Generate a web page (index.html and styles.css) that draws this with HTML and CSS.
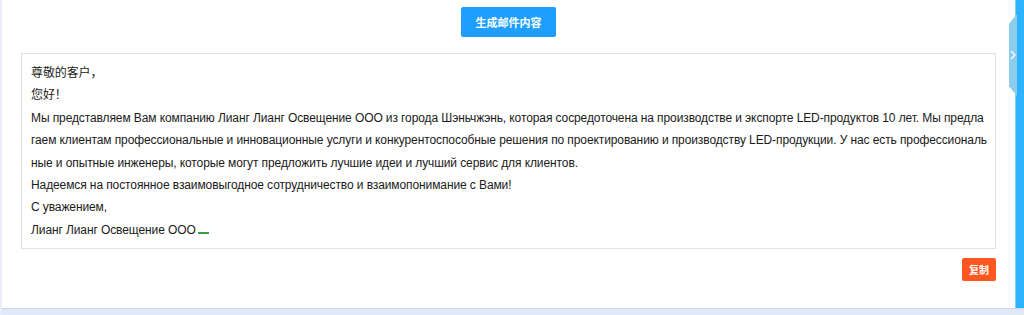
FILE: index.html
```html
<!DOCTYPE html>
<html>

<head>
	<title>生成邮件内容</title>
	<link rel="stylesheet" href="styles.css">
</head>

<body>

	<div class="page">
		<div class="main">
			<div class="toolbar">
				<button class="btn btn_blue" type="button">生成邮件内容</button>
			</div>

			<div class="mail_box" contenteditable="true">
				<div>尊敬的客户，</div>
				<div>您好！</div>
				<div>Мы представляем Вам компанию Лианг Лианг Освещение ООО из города Шэньчжэнь, которая сосредоточена на производстве и экспорте LED-продуктов 10 лет. Мы предлагаем клиентам профессиональные и инновационные услуги и конкурентоспособные решения по проектированию и производству LED-продукции. У нас есть профессиональные и опытные инженеры, которые могут предложить лучшие идеи и лучший сервис для клиентов.</div>
				<div>Надеемся на постоянное взаимовыгодное сотрудничество и взаимопонимание с Вами!</div>
				<div>С уважением,</div>
				<div>Лианг Лианг Освещение ООО<span class="caret"></span></div>
			</div>

			<div class="actions">
				<button class="btn btn_red btn_xs" type="button">复制</button>
			</div>
		</div>

		<div class="side_bar">
			<div class="side_tab">
				<svg width="6" height="10" viewBox="0 0 6 10">
					<polyline points="1,1 5,5 1,9" fill="none" stroke="#fff" stroke-width="1.2" />
				</svg>
			</div>
		</div>
	</div>

	<div class="bottom_strip"></div>

</body>

</html>
```

FILE: styles.css
```css
html,
body {
	margin: 0;
	padding: 0;
	height: 100%;
	overflow: hidden;
	background: #fff;
}

body {
	font-family: "Liberation Sans", "Noto Sans CJK SC", sans-serif;
	font-size: 12px;
	color: #1a1a1a;
	border-left: 2px solid #ebeaf8;
	box-sizing: border-box;
}

.page {
	height: 308px;
	display: flex;
}

.main {
	flex: 1;
	padding: 7px 19px 0 19px;
}

.toolbar {
	display: flex;
	justify-content: center;
	margin-bottom: 16px;
}

.btn {
	border: none;
	color: #fff;
	font-family: "Noto Sans CJK SC", sans-serif;
	font-weight: bold;
	cursor: pointer;
	padding: 0;
}

.btn_blue {
	background-color: #1e9fff;
	width: 95px;
	height: 30px;
	border-radius: 2px;
	font-size: 11px;
}

.btn_red {
	background-color: #ff5722;
}

.btn_xs {
	width: 34px;
	height: 23px;
	border-radius: 2px;
	font-size: 10px;
}

.mail_box {
	border: 1px solid #e2e2e2;
	padding: 8px 8px 7px 9px;
	line-height: 22.4px;
	letter-spacing: -0.1px;
	word-break: break-all;
	outline: none;
}

.caret {
	display: inline-block;
	width: 11px;
	margin-left: 2px;
	border-bottom: 2px solid #3aa048;
}

.actions {
	display: flex;
	justify-content: flex-end;
	margin-top: 9px;
}

.side_bar {
	width: 8px;
	background: #2db2ff;
	border-left: 1px solid #7fcdf8;
	position: relative;
}

.side_tab {
	position: absolute;
	left: -7px;
	top: 14px;
	width: 8px;
	height: 82px;
	background: #8dcdec;
	clip-path: polygon(100% 0, 100% 100%, 0 88%, 0 12%);
	display: flex;
	align-items: center;
	justify-content: center;
}

.bottom_strip {
	height: 7px;
	background: #dfe9f7;
	border-top: 1px solid #c9d7ea;
}
```
